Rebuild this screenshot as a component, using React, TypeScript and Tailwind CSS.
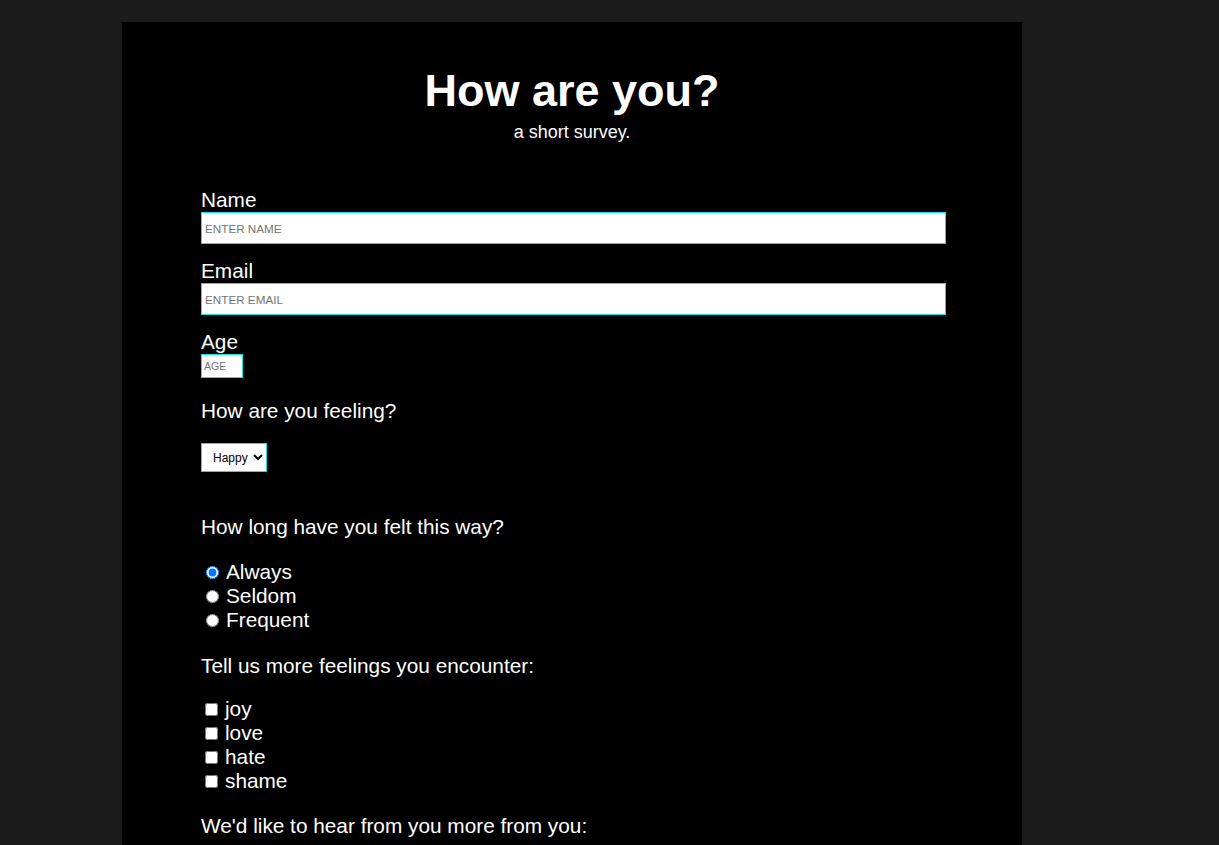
import React from "react";

export default function App() {
  return (
    <div
      className="min-h-screen bg-[#1b1b1b] pt-[22px] text-white"
      style={{ fontFamily: '"Liberation Sans", Arial, sans-serif' }}
    >
      <div className="ml-[122px] w-[900px] bg-black pt-[43px] pb-[60px]">
        <h1 className="text-center text-[45px] font-bold leading-[52px]">How are you?</h1>
        <p className="mt-[5px] text-center text-[18px] leading-[21px]">a short survey.</p>

        <form className="ml-[79px] mt-[45px] w-[745px]" onSubmit={(e) => e.preventDefault()}>
          <label className="block text-[20.8px] leading-[24px]" htmlFor="name">Name</label>
          <input
            id="name"
            type="text"
            placeholder="ENTER NAME"
            className="block h-[32px] w-[745px] border border-[#00e8f0] bg-white px-[3px] text-[11.7px] text-black placeholder:text-[#757575] outline-none"
          />

          <label className="mt-[15px] block text-[20.8px] leading-[24px]" htmlFor="email">Email</label>
          <input
            id="email"
            type="email"
            placeholder="ENTER EMAIL"
            className="block h-[32px] w-[745px] border border-[#00e8f0] bg-white px-[3px] text-[11.7px] text-black placeholder:text-[#757575] outline-none"
          />

          <label className="mt-[15px] block text-[20.8px] leading-[24px]" htmlFor="age">Age</label>
          <input
            id="age"
            type="text"
            placeholder="AGE"
            className="block h-[24px] w-[42px] border border-[#00e8f0] bg-white px-[2px] text-[10.5px] text-black placeholder:text-[#757575] outline-none"
          />

          <p className="mt-[21px] text-[20.8px] leading-[24px]">How are you feeling?</p>
          <select
            defaultValue="happy"
            className="mt-[20px] block h-[29px] w-[66px] border border-[#00e8f0] bg-white pl-[7px] text-[12px] text-black outline-none"
          >
            <option value="happy">Happy</option>
            <option value="sad">Sad</option>
            <option value="angry">Angry</option>
          </select>

          <p className="mt-[43px] text-[20.8px] leading-[24px]">How long have you felt this way?</p>
          <div className="mt-[21px]">
            {["Always", "Seldom", "Frequent"].map((v, i) => (
              <label key={v} className="flex h-[24px] items-center text-[20.8px] leading-[24px]">
                <input
                  type="radio"
                  name="duration"
                  defaultChecked={i === 0}
                  className="ml-[5px] mr-[7px] h-[13px] w-[13px]"
                />
                <span>{v}</span>
              </label>
            ))}
          </div>

          <p className="mt-[22px] text-[20.8px] leading-[24px]">Tell us more feelings you encounter:</p>
          <div className="mt-[19px]">
            {["joy", "love", "hate", "shame"].map((v) => (
              <label key={v} className="flex h-[24px] items-center text-[20.8px] leading-[24px]">
                <input type="checkbox" className="ml-[4px] mr-[7px] h-[13px] w-[13px]" />
                <span>{v}</span>
              </label>
            ))}
          </div>

          <p className="mt-[21px] text-[20.8px] leading-[24px]">We'd like to hear from you more from you:</p>
          <textarea className="mt-[20px] block h-[100px] w-[745px] border border-[#00e8f0] bg-white text-black" />
        </form>
      </div>
    </div>
  );
}
